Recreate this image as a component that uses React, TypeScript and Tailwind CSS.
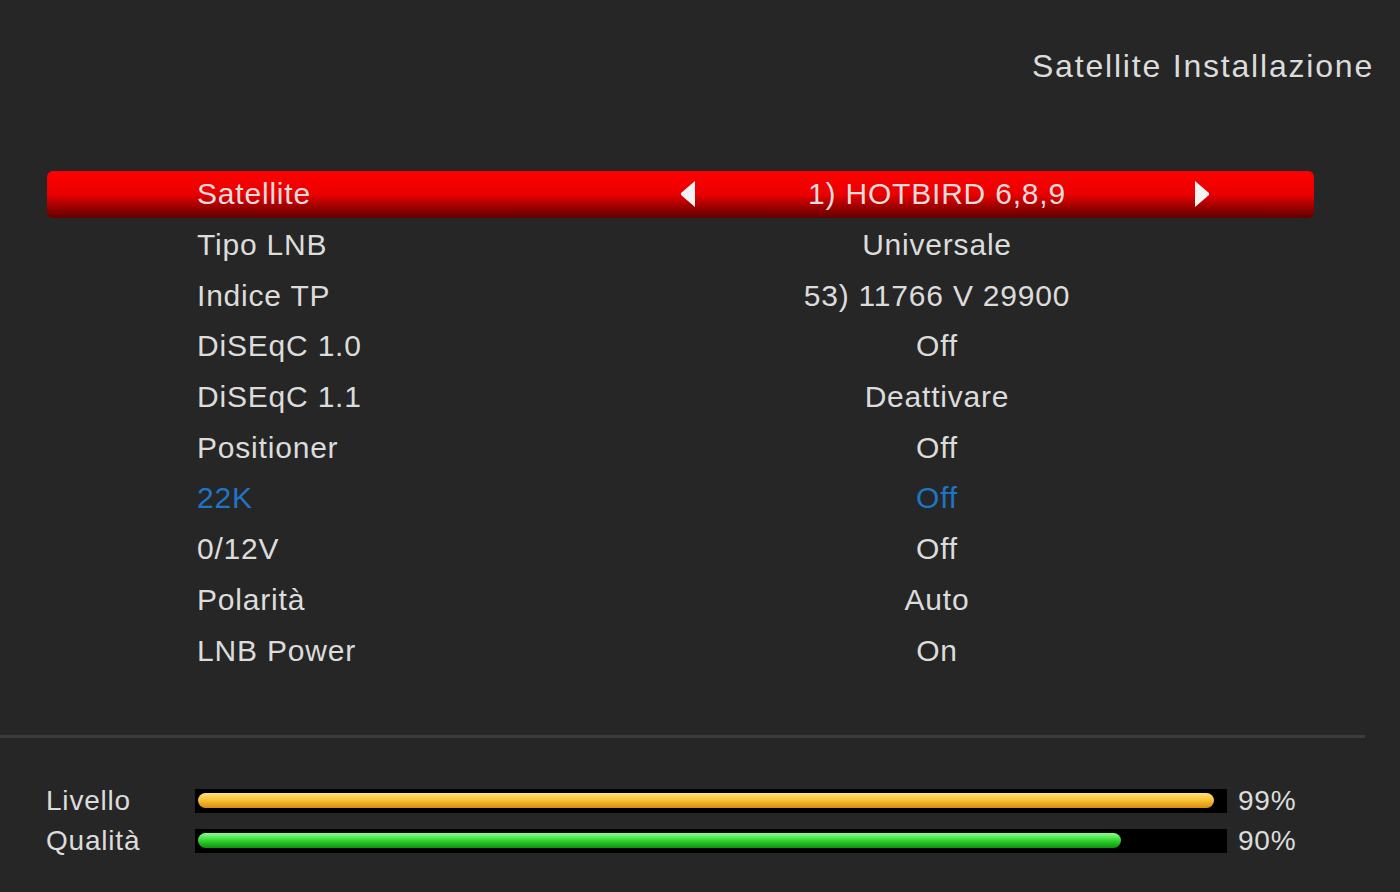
import React from "react";

const rows = [
  { label: "Satellite", value: "1) HOTBIRD 6,8,9", selected: true },
  { label: "Tipo LNB", value: "Universale" },
  { label: "Indice TP", value: "53) 11766 V 29900" },
  { label: "DiSEqC 1.0", value: "Off" },
  { label: "DiSEqC 1.1", value: "Deattivare" },
  { label: "Positioner", value: "Off" },
  { label: "22K", value: "Off", blue: true },
  { label: "0/12V", value: "Off" },
  { label: "Polarità", value: "Auto" },
  { label: "LNB Power", value: "On" },
];

function Arrow({ dir }: { dir: "left" | "right" }) {
  return (
    <svg width="15" height="28" viewBox="0 0 15 28" className="shrink-0">
      {dir === "left" ? (
        <polygon points="15,1 15,27 1,15 1,13" fill="#f4f4f4" />
      ) : (
        <polygon points="0,1 0,27 14,15 14,13" fill="#f4f4f4" />
      )}
    </svg>
  );
}

function Bar({ label, pct, fill, gradient }: { label: string; pct: string; fill: number; gradient: string }) {
  return (
    <div className="flex items-center h-[40px]">
      <div className="w-[195px] pl-[46px] text-[28px] leading-[32px] text-[#dcdcdc] tracking-[0.8px]">{label}</div>
      <div className="w-[1032px] h-[24px] bg-black flex items-center pl-[3px]">
        <div className={`h-[15px] rounded-full ${gradient}`} style={{ width: fill }} />
      </div>
      <div className="pl-[11px] text-[28px] leading-[32px] text-[#dcdcdc] tracking-[0.8px]">{pct}</div>
    </div>
  );
}

export default function App() {
  return (
    <div
      className="w-[1400px] h-[892px] bg-[#262626] overflow-hidden flex flex-col"
      style={{ fontFamily: '"Liberation Sans", Arial, sans-serif' }}
    >
      {/* Header */}
      <div className="flex justify-end pt-[49px] pr-[26px] h-[169px]">
        <h1 className="text-[32px] leading-[34px] text-[#dcdcdc] tracking-[1.8px]">Satellite Installazione</h1>
      </div>

      {/* Settings list */}
      <div className="flex flex-col">
        {rows.map((r) => (
          <div key={r.label} className="h-[50.7px] flex items-center px-[47px]">
            <div
              className={`w-[1267px] h-[47px] flex items-center rounded-[6px] ${
                r.selected ? "bg-gradient-to-b from-[#ff0000] via-[#ea0000] to-[#600000]" : ""
              } ${r.blue ? "text-[#1f74c6]" : "text-[#dcdcdc]"} text-[30px] leading-[32px] tracking-[0.8px]`}
            >
              <div className="w-[590px] pl-[150px]">{r.label}</div>
              {r.selected ? (
                <div className="w-[530px] ml-[43px] flex items-center">
                  <Arrow dir="left" />
                  <div className="flex-1 text-center pr-[16px]">{r.value}</div>
                  <Arrow dir="right" />
                </div>
              ) : (
                <div className="w-[600px] text-center">{r.value}</div>
              )}
            </div>
          </div>
        ))}
      </div>

      {/* Divider */}
      <div className="mt-[59px] w-[1365px] h-[3px] bg-[#3c3c3c]" />

      {/* Signal bars */}
      <div className="flex flex-col mt-[43px]">
        <Bar
          label="Livello"
          pct="99%"
          fill={1016}
          gradient="bg-gradient-to-b from-[#ffe27a] via-[#f7c12e] to-[#d98c0c]"
        />
        <Bar
          label="Qualità"
          pct="90%"
          fill={923}
          gradient="bg-gradient-to-b from-[#8aff8a] via-[#2fd62f] to-[#0f8f0f]"
        />
      </div>
    </div>
  );
}
